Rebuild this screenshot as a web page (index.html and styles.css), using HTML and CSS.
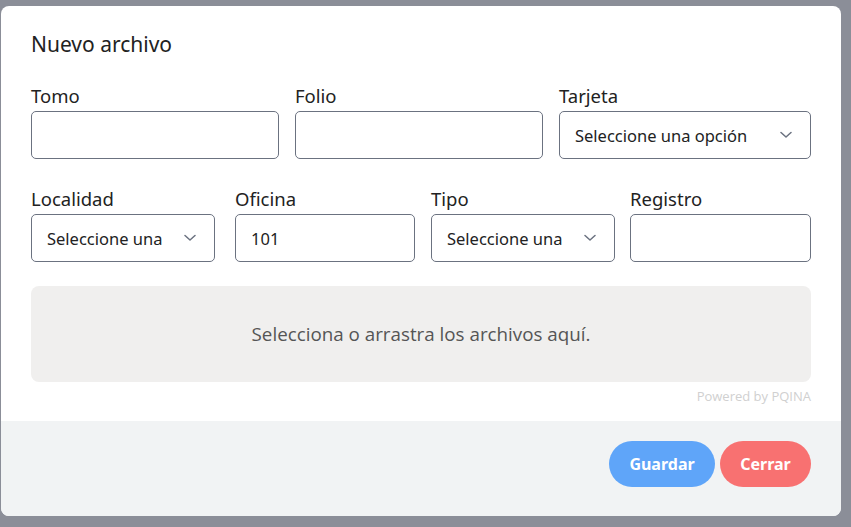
FILE: index.html
```html
<!DOCTYPE html>
<html lang="es">
<head>
<meta charset="utf-8">
<title>Nuevo archivo</title>
<link rel="stylesheet" href="styles.css">
</head>
<body>
<div class="backdrop">
  <div class="modal">
    <div class="modal-body">
      <h2 class="title">Nuevo archivo</h2>
      <div class="row row-3">
        <div class="field">
          <label class="label">Tomo</label>
          <div class="control"></div>
        </div>
        <div class="field">
          <label class="label">Folio</label>
          <div class="control"></div>
        </div>
        <div class="field">
          <label class="label">Tarjeta</label>
          <div class="control select"><span>Seleccione una opción</span>
            <svg class="chev" width="12" height="8" viewBox="0 0 12 8"><path d="M1 1.5 L6 6 L11 1.5" fill="none" stroke="#6b7280" stroke-width="1.5" stroke-linecap="round" stroke-linejoin="round"/></svg>
          </div>
        </div>
      </div>
      <div class="row row-4">
        <div class="field">
          <label class="label">Localidad</label>
          <div class="control select w184"><span>Seleccione una</span>
            <svg class="chev" width="12" height="8" viewBox="0 0 12 8"><path d="M1 1.5 L6 6 L11 1.5" fill="none" stroke="#6b7280" stroke-width="1.5" stroke-linecap="round" stroke-linejoin="round"/></svg>
          </div>
        </div>
        <div class="field">
          <label class="label">Oficina</label>
          <div class="control w180"><span>101</span></div>
        </div>
        <div class="field">
          <label class="label">Tipo</label>
          <div class="control select w184"><span>Seleccione una</span>
            <svg class="chev" width="12" height="8" viewBox="0 0 12 8"><path d="M1 1.5 L6 6 L11 1.5" fill="none" stroke="#6b7280" stroke-width="1.5" stroke-linecap="round" stroke-linejoin="round"/></svg>
          </div>
        </div>
        <div class="field">
          <label class="label">Registro</label>
          <div class="control"></div>
        </div>
      </div>
      <div class="drop">Selecciona o arrastra los archivos aquí.</div>
      <div class="credits">Powered by PQINA</div>
    </div>
    <div class="modal-footer">
      <button class="btn btn-blue">Guardar</button>
      <button class="btn btn-red">Cerrar</button>
    </div>
  </div>
</div>
</body>
</html>
```
FILE: styles.css
```css
* { box-sizing: border-box; }
html, body { margin: 0; padding: 0; }
body {
  width: 851px;
  height: 527px;
  background: #8b8e98;
  font-family: "Noto Sans", "Open Sans", sans-serif;
  overflow: hidden;
}
.backdrop {
  padding: 6px 0 0 1px;
}
.modal {
  width: 840px;
  height: 510px;
  background: #fff;
  border-radius: 8px;
  overflow: hidden;
  display: flex;
  flex-direction: column;
}
.modal-body {
  padding: 24px 30px 0 30px;
  height: 415px;
}
.title {
  margin: 0;
  font-size: 21px;
  line-height: 28px;
  font-weight: 400;
  color: #222;
}
.row {
  display: grid;
}
.row-3 {
  margin-top: 26px;
  grid-template-columns: 248px 248px 1fr;
  column-gap: 16px;
}
.row-4 {
  margin-top: 28px;
  grid-template-columns: 204px 196px 199px 1fr;
}
.label {
  display: block;
  font-size: 18.5px;
  line-height: 24px;
  color: #222;
  margin-bottom: 3px;
}
.control {
  height: 48px;
  border: 1px solid #6b7280;
  border-radius: 5px;
  background: #fff;
  display: flex;
  align-items: center;
  padding: 0 15px;
  font-size: 16.5px;
  color: #222;
}
.select {
  justify-content: space-between;
  padding-right: 18px;
}
.chev { display: block; }
.w184 { width: 184px; }
.w180 { width: 180px; }
.drop {
  margin-top: 24px;
  height: 96px;
  background: #f0efee;
  border-radius: 8px;
  display: flex;
  align-items: center;
  justify-content: center;
  font-family: "Open Sans", "Noto Sans", sans-serif;
  font-size: 18.8px;
  color: #555;
}
.credits {
  margin-top: 6px;
  text-align: right;
  font-family: "Open Sans", sans-serif;
  font-size: 13px;
  line-height: 16px;
  color: #d0d0d0;
}
.modal-footer {
  flex: 1;
  background: #f1f3f4;
  display: flex;
  justify-content: flex-end;
  align-items: flex-start;
  gap: 5px;
  padding: 20px 30px 0 30px;
}
.btn {
  height: 46px;
  border: none;
  border-radius: 23px;
  color: #fff;
  font-family: "Noto Sans", sans-serif;
  font-weight: 700;
  font-size: 16px;
  padding: 0 20px;
}
.btn-blue { background: #5fa5f9; width: 106px; }
.btn-red { background: #f87171; width: 91px; }
```
